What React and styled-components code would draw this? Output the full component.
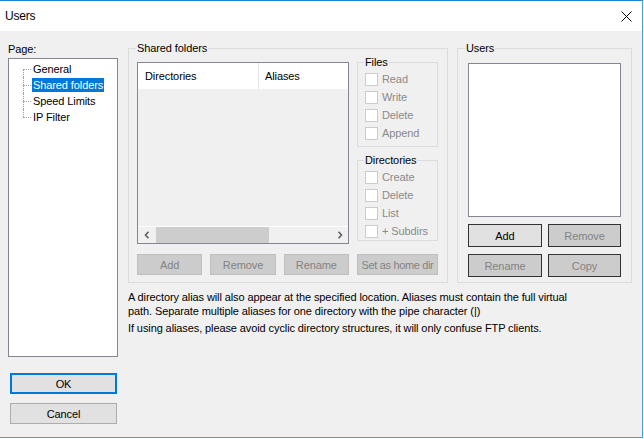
import React from "react";
import styled, { createGlobalStyle } from "styled-components";

const GlobalStyle = createGlobalStyle`
  html, body {
    margin: 0;
    padding: 0;
    background: #ffffff;
  }
  body {
    font-family: "Liberation Sans", Arial, sans-serif;
    font-size: 11px;
    letter-spacing: -0.1px;
    color: #000;
  }
  * {
    box-sizing: border-box;
  }
`;

const Window = styled.div`
  width: 643px;
  height: 438px;
  display: flex;
  flex-direction: column;
  background: #f0f0f0;
  border-top: 1px solid #1883d7;
  border-right: 1px solid #4a9ee3;
  border-bottom: 1px solid #4a9ee3;
`;

const TitleBar = styled.div`
  height: 30px;
  flex: none;
  display: flex;
  align-items: center;
  justify-content: space-between;
  padding: 0 10px 0 5px;
  background: #ffffff;
  font-size: 12px;
  letter-spacing: -0.2px;
`;

const Body = styled.div`
  flex: 1;
  display: flex;
  gap: 10px;
  padding: 11px 10px 13px 8px;
  min-height: 0;
`;

const Sidebar = styled.div`
  width: 110px;
  flex: none;
  display: flex;
  flex-direction: column;
`;

const Label = styled.div`
  line-height: 14px;
  margin-bottom: 2px;
`;

const Tree = styled.ul`
  flex: 1;
  margin: 0;
  list-style: none;
  background: #ffffff;
  border: 1px solid #828790;
  padding: 2px 0 0 14px;
`;

const TreeItem = styled.li`
  position: relative;
  height: 16px;
  display: flex;
  align-items: center;
  padding-left: 9px;

  &::before {
    content: "";
    position: absolute;
    left: 0;
    top: 8px;
    width: 8px;
    border-top: 1px dotted #a0a0a0;
  }
  &::after {
    content: "";
    position: absolute;
    left: 0;
    top: ${({ $first }) => ($first ? "8px" : "0")};
    bottom: ${({ $last }) => ($last ? "8px" : "0")};
    border-left: 1px dotted #a0a0a0;
  }
`;

const TreeText = styled.span`
  line-height: 14px;
  padding: 0 1px;
  background: ${({ $selected }) => ($selected ? "#0078d7" : "transparent")};
  color: ${({ $selected }) => ($selected ? "#ffffff" : "#000")};
`;

const DialogButton = styled.button`
  font: inherit;
  letter-spacing: inherit;
  color: #000;
  width: 107px;
  height: 21px;
  margin: ${({ $primary }) => ($primary ? "16px 0 0 2px" : "9px 0 0 2px")};
  background: #e1e1e1;
  border: ${({ $primary }) => ($primary ? "2px solid #0078d7" : "1px solid #adadad")};
  padding: 0;
`;

const Main = styled.div`
  flex: 1;
  display: flex;
  flex-direction: column;
  min-width: 0;
`;

const TopRow = styled.div`
  display: flex;
  gap: 9px;
  margin-top: 6px;
`;

const GroupBox = styled.div`
  width: ${({ $width }) => $width};
  border: 1px solid #dcdcdc;
  padding: ${({ $pad }) => $pad};
  margin-top: ${({ $mt }) => $mt || "0"};
  display: flex;
  flex-direction: column;
`;

const GroupTitle = styled.div`
  margin: -8px 0 0 ${({ $ml }) => $ml || "-1px"};
  padding: 0 1px;
  width: fit-content;
  line-height: 14px;
  background: #f0f0f0;
  color: #000;
`;

const SharedGrid = styled.div`
  margin-top: 7px;
  display: grid;
  grid-template-columns: 212px 81px;
  grid-template-rows: 182px 21px;
  column-gap: 8px;
  row-gap: 10px;
`;

const ListView = styled.div`
  border: 1px solid #828790;
  display: flex;
  flex-direction: column;
  background: #f0f0f0;
`;

const ListHeader = styled.div`
  height: 26px;
  flex: none;
  display: flex;
  background: #ffffff;
`;

const HeaderCell = styled.div`
  width: ${({ $width }) => $width};
  display: flex;
  align-items: center;
  padding-left: ${({ $pl }) => $pl};
  border-right: ${({ $sep }) => ($sep ? "1px solid #e5e5e5" : "none")};
`;

const ListBody = styled.div`
  flex: 1;
`;

const ScrollBar = styled.div`
  height: 17px;
  flex: none;
  display: flex;
  background: #f0f0f0;
  border-top: 1px solid #ffffff;
`;

const ScrollArrow = styled.div`
  width: 17px;
  flex: none;
  display: flex;
  align-items: center;
  justify-content: center;
`;

const ScrollTrack = styled.div`
  flex: 1;
  display: flex;
`;

const ScrollThumb = styled.div`
  width: 113px;
  margin-left: 1px;
  background: #cdcdcd;
`;

const PermColumn = styled.div`
  display: flex;
  flex-direction: column;
`;

const CheckList = styled.div`
  margin-top: 1px;
  display: flex;
  flex-direction: column;
`;

const CheckRow = styled.div`
  height: 18px;
  display: flex;
  align-items: center;
  gap: 4px;
  color: #8a8a8a;
  white-space: nowrap;
`;

const CheckBox = styled.span`
  width: 13px;
  height: 13px;
  flex: none;
  background: #ffffff;
  border: 1px solid #cccccc;
`;

const ButtonRow = styled.div`
  display: grid;
  grid-template-columns: repeat(3, 1fr);
  gap: 8px;
`;

const Button = styled.button`
  font: inherit;
  letter-spacing: ${({ $tight }) => ($tight ? "-0.35px" : "inherit")};
  height: ${({ $h }) => $h || "21px"};
  padding: 0;
  white-space: nowrap;
  overflow: hidden;
  color: ${({ $enabled }) => ($enabled ? "#000" : "#838383")};
  background: ${({ $enabled }) => ($enabled ? "#e1e1e1" : "#cccccc")};
  border: 1px solid ${({ $dark }) => ($dark ? "#333333" : "#bfbfbf")};
`;

const UserList = styled.div`
  margin-top: 8px;
  height: 154px;
  background: #ffffff;
  border: 1px solid #828790;
`;

const UserButtons = styled.div`
  margin-top: 7px;
  display: grid;
  grid-template-columns: 74px 73px;
  grid-auto-rows: 23px;
  column-gap: 6px;
  row-gap: 7px;
`;

const Notes = styled.div`
  margin-top: 7px;
  line-height: 14px;
`;

const Note = styled.p`
  margin: 0 0 3px 0;
  white-space: nowrap;
`;

const Chevron = ({ dir }) => (
  <svg width="6" height="8" viewBox="0 0 6 8">
    <polyline
      points={dir === "left" ? "4.5,0.8 1.5,4 4.5,7.2" : "1.5,0.8 4.5,4 1.5,7.2"}
      fill="none"
      stroke="#606060"
      strokeWidth="1.6"
    />
  </svg>
);

const CloseIcon = () => (
  <svg width="11" height="11" viewBox="0 0 11 11">
    <path d="M0.5 0.5 L10.5 10.5 M10.5 0.5 L0.5 10.5" stroke="#000" strokeWidth="1" />
  </svg>
);

const pages = ["General", "Shared folders", "Speed Limits", "IP Filter"];
const filePerms = ["Read", "Write", "Delete", "Append"];
const dirPerms = ["Create", "Delete", "List", "+ Subdirs"];

const App = () => {
  return (
    <>
      <GlobalStyle />
      <Window>
        <TitleBar>
          <span>Users</span>
          <CloseIcon />
        </TitleBar>
        <Body>
          <Sidebar>
            <Label>Page:</Label>
            <Tree>
              {pages.map((p, i) => (
                <TreeItem key={p} $first={i === 0} $last={i === pages.length - 1}>
                  <TreeText $selected={p === "Shared folders"}>{p}</TreeText>
                </TreeItem>
              ))}
            </Tree>
            <DialogButton $primary>OK</DialogButton>
            <DialogButton>Cancel</DialogButton>
          </Sidebar>

          <Main>
            <TopRow>
              <GroupBox $width="320px" $pad="0 9px 7px 8px">
                <GroupTitle>Shared folders</GroupTitle>
                <SharedGrid>
                  <ListView>
                    <ListHeader>
                      <HeaderCell $width="121px" $pl="7px" $sep>
                        Directories
                      </HeaderCell>
                      <HeaderCell $width="80px" $pl="6px">
                        Aliases
                      </HeaderCell>
                    </ListHeader>
                    <ListBody />
                    <ScrollBar>
                      <ScrollArrow>
                        <Chevron dir="left" />
                      </ScrollArrow>
                      <ScrollTrack>
                        <ScrollThumb />
                      </ScrollTrack>
                      <ScrollArrow>
                        <Chevron dir="right" />
                      </ScrollArrow>
                    </ScrollBar>
                  </ListView>

                  <PermColumn>
                    <GroupBox $pad="0 0 4px 7px">
                      <GroupTitle>Files</GroupTitle>
                      <CheckList>
                        {filePerms.map((p) => (
                          <CheckRow key={p}>
                            <CheckBox />
                            {p}
                          </CheckRow>
                        ))}
                      </CheckList>
                    </GroupBox>
                    <GroupBox $pad="0 0 0 7px" $mt="13px">
                      <GroupTitle>Directories</GroupTitle>
                      <CheckList>
                        {dirPerms.map((p) => (
                          <CheckRow key={p}>
                            <CheckBox />
                            {p}
                          </CheckRow>
                        ))}
                      </CheckList>
                    </GroupBox>
                  </PermColumn>

                  <ButtonRow>
                    <Button>Add</Button>
                    <Button>Remove</Button>
                    <Button>Rename</Button>
                  </ButtonRow>
                  <Button $tight>Set as home dir</Button>
                </SharedGrid>
              </GroupBox>

              <GroupBox $width="175px" $pad="0 10px 5px 10px">
                <GroupTitle $ml="-3px">Users</GroupTitle>
                <UserList />
                <UserButtons>
                  <Button $h="23px" $enabled $dark>
                    Add
                  </Button>
                  <Button $h="23px" $dark>
                    Remove
                  </Button>
                  <Button $h="23px" $dark>
                    Rename
                  </Button>
                  <Button $h="23px" $dark>
                    Copy
                  </Button>
                </UserButtons>
              </GroupBox>
            </TopRow>

            <Notes>
              <Note>
                A directory alias will also appear at the specified location. Aliases must contain the full virtual
                <br />
                path. Separate multiple aliases for one directory with the pipe character (|)
              </Note>
              <Note>If using aliases, please avoid cyclic directory structures, it will only confuse FTP clients.</Note>
            </Notes>
          </Main>
        </Body>
      </Window>
    </>
  );
};

export default App;
